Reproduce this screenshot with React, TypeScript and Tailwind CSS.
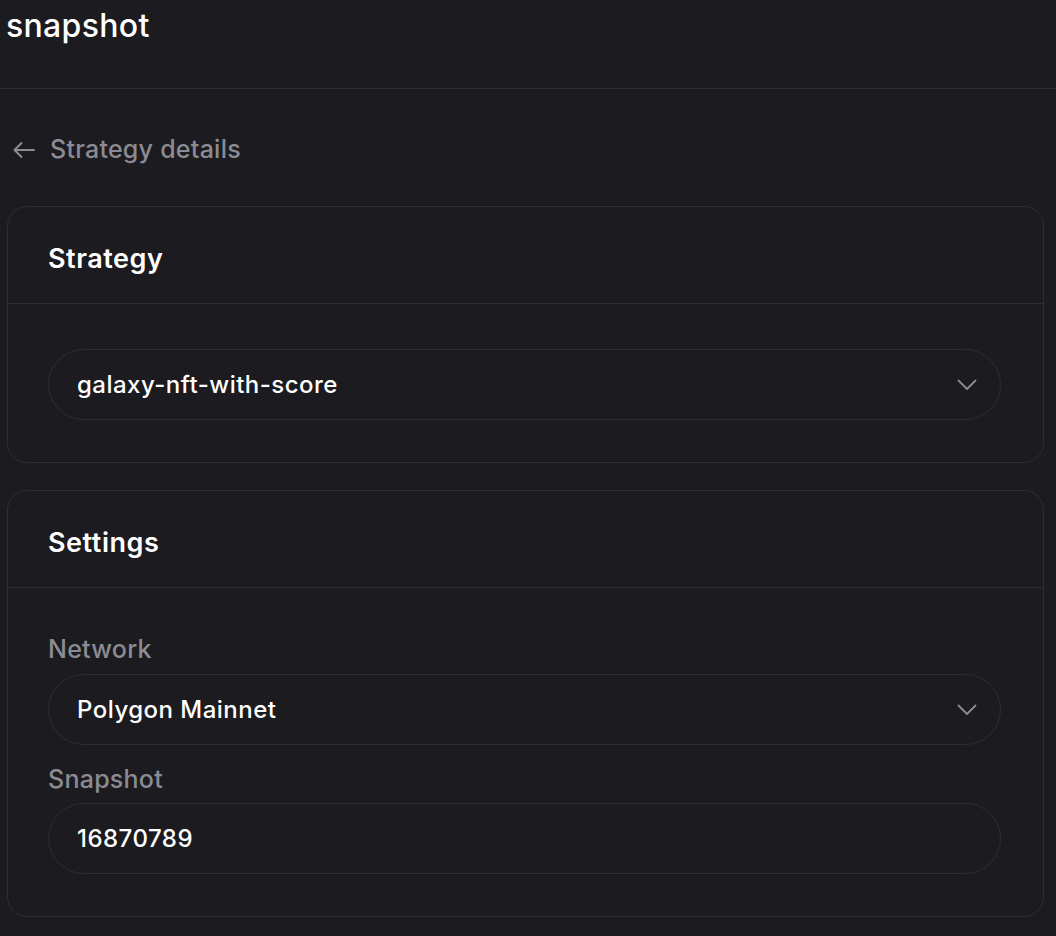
import React from 'react';

const Chevron = () => (
  <svg width="20" height="12" viewBox="0 0 20 12" fill="none" className="shrink-0">
    <path d="M1.5 1.5 L10 10 L18.5 1.5" stroke="#8b8b93" strokeWidth="1.8" strokeLinecap="round" strokeLinejoin="round" />
  </svg>
);

const BackArrow = () => (
  <svg width="24" height="18" viewBox="0 0 24 18" fill="none">
    <path d="M22 9 H2.5 M9.5 2 L2.5 9 L9.5 16" stroke="#8b8b93" strokeWidth="2" strokeLinecap="round" strokeLinejoin="round" />
  </svg>
);

const Card = ({ title, children }: { title: string; children: React.ReactNode }) => (
  <section className="rounded-[20px] border border-[#2e2d33]">
    <div className="h-[97px] border-b border-[#2e2d33] px-[40px] pt-[34px]">
      <h2 className="text-[27px] font-semibold leading-[36px] tracking-[0.02em] text-white">{title}</h2>
    </div>
    {children}
  </section>
);

const SelectBox = ({ value }: { value: string }) => (
  <div className="flex h-[71px] items-center justify-between rounded-full border border-[#2e2d33] pl-[28px] pr-[23px]">
    <span className="text-[24px] font-medium tracking-[0.02em] text-white">{value}</span>
    <Chevron />
  </div>
);

export default function App() {
  return (
    <div className="min-h-screen bg-[#1c1b20] font-['Inter',sans-serif] text-white">
      <header className="h-[89px] border-b border-[#2e2d33] px-[6px] pt-[7px]">
        <span className="text-[32px] font-medium leading-[38px] tracking-[0.01em]">snapshot</span>
      </header>

      <div className="pl-[7px] pr-[12px]">
        <div className="flex h-[44px] mt-[39px] items-center gap-[14px] pl-[5px] text-[25px] font-medium tracking-[0.01em] text-[#8b8b93]">
          <BackArrow />
          <span>Strategy details</span>
        </div>

        <div className="mt-[34px] flex flex-col gap-[27px]">
          <Card title="Strategy">
            <div className="pl-[40px] pr-[42px] pb-[42px] pt-[45px]">
              <SelectBox value="galaxy-nft-with-score" />
            </div>
          </Card>

          <Card title="Settings">
            <div className="flex flex-col pl-[40px] pr-[42px] pb-[42px] pt-[46px]">
              <label className="text-[25px] font-medium leading-[30px] tracking-[0.01em] text-[#8b8b93]">Network</label>
              <div className="mt-[10px]">
                <SelectBox value="Polygon Mainnet" />
              </div>
              <label className="mt-[19px] text-[25px] font-medium leading-[30px] tracking-[0.01em] text-[#8b8b93]">Snapshot</label>
              <div className="mt-[9px] flex h-[71px] items-center rounded-full border border-[#2e2d33] px-[28px]">
                <span className="text-[24px] font-medium tracking-[0.02em] text-white">16870789</span>
              </div>
            </div>
          </Card>
        </div>
      </div>
    </div>
  );
}
